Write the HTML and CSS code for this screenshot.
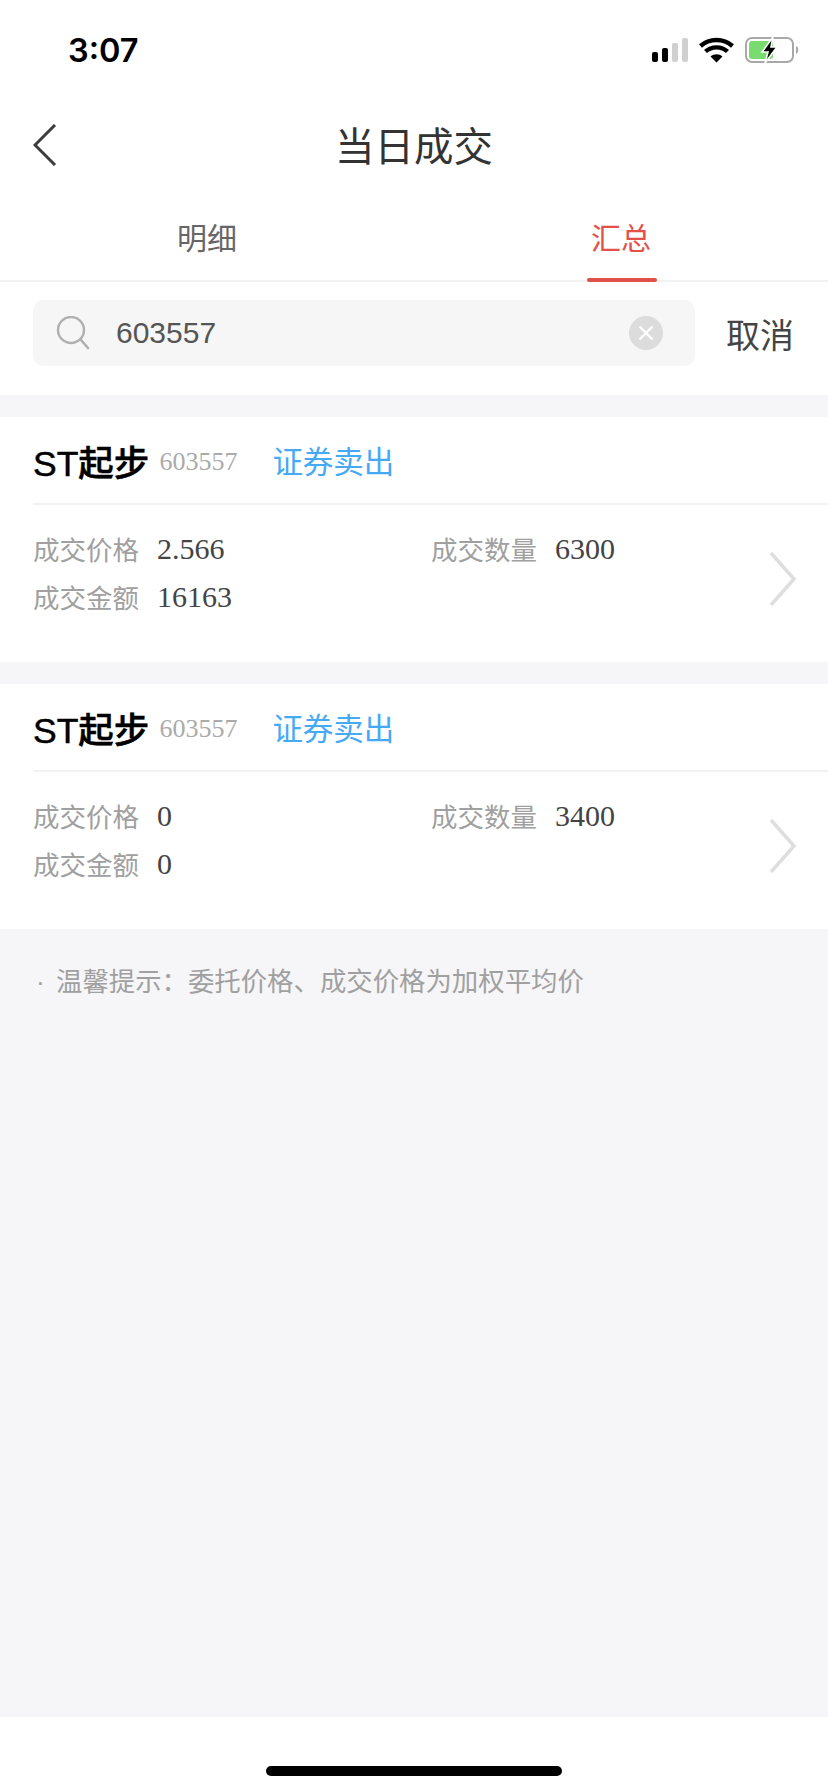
FILE: index.html
```html
<!DOCTYPE html>
<html lang="en">
<head>
    <meta charset="UTF-8">
    <meta name="viewport" content="width=device-width, initial-scale=1.0">
    <title>当日成交</title>
    <link rel="stylesheet" href="styles.css">
</head>
<body>
    <div class="screen">
        <div class="status-bar">
            <span class="status-time">3:07</span>
            <svg class="status-icons" width="148" height="26" viewBox="0 0 148 26">
                <rect x="1" y="15" width="6" height="10" rx="2" fill="#000"/>
                <rect x="11" y="11" width="6" height="14" rx="2" fill="#000"/>
                <rect x="21" y="6" width="6" height="19" rx="2" fill="#d0d0d0"/>
                <rect x="31" y="1" width="6" height="24" rx="2" fill="#d0d0d0"/>
                <path d="M49.5 9 C58.5 1 72.5 1 81.5 9 M54.5 14.5 C60.5 9 70.5 9 76.5 14.5" fill="none" stroke="#000" stroke-width="4.4"/>
                <path d="M59.5 19.5 C63 16.5 68 16.5 71.5 19.5 L65.5 25.5 Z" fill="#000"/>
                <rect x="95" y="1" width="47" height="24" rx="6" fill="none" stroke="#a8a8a8" stroke-width="2"/>
                <rect x="98" y="4" width="24" height="18" rx="3" fill="#7adb6f"/>
                <path d="M145 9 C148 10 148 16 145 17 Z" fill="#a8a8a8"/>
                <path d="M122 0 L111 15 L117 15 L114 26 L126 10 L120 10 Z" fill="#000" stroke="#fff" stroke-width="1.6"/>
            </svg>
        </div>

        <div class="nav-bar">
            <svg class="back-icon" width="24" height="42" viewBox="0 0 24 42">
                <path d="M22 1 L2 21 L22 41" fill="none" stroke="#3c3c3c" stroke-width="3"/>
            </svg>
            <h1 class="nav-title">当日成交</h1>
        </div>

        <div class="tabs">
            <div class="tab">明细</div>
            <div class="tab tab-active">汇总</div>
        </div>

        <div class="search-row">
            <div class="search-box">
                <svg class="search-icon" width="34" height="34" viewBox="0 0 34 34">
                    <circle cx="15" cy="14" r="13" fill="none" stroke="#b0b0b0" stroke-width="2.4"/>
                    <path d="M25 24 L32 32" stroke="#b0b0b0" stroke-width="2.6" stroke-linecap="round"/>
                </svg>
                <span class="search-text">603557</span>
                <svg class="clear-icon" width="34" height="34" viewBox="0 0 34 34">
                    <circle cx="17" cy="17" r="17" fill="#dcdcdc"/>
                    <path d="M10.5 10.5 L23.5 23.5 M23.5 10.5 L10.5 23.5" stroke="#fff" stroke-width="2.4"/>
                </svg>
            </div>
            <span class="search-cancel">取消</span>
        </div>

        <div class="content">
            <div class="card">
                <div class="card-head">
                    <span class="stock-name">ST起步</span>
                    <span class="stock-code">603557</span>
                    <span class="trade-type">证券卖出</span>
                </div>
                <div class="card-body">
                    <div class="fields">
                        <div class="field"><span class="field-label">成交价格</span><span class="field-value">2.566</span></div>
                        <div class="field"><span class="field-label">成交数量</span><span class="field-value">6300</span></div>
                        <div class="field"><span class="field-label">成交金额</span><span class="field-value">16163</span></div>
                    </div>
                    <svg class="card-arrow" width="28" height="54" viewBox="0 0 28 54">
                        <path d="M2 1 L25 27 L2 53" fill="none" stroke="#dedede" stroke-width="3.5"/>
                    </svg>
                </div>
            </div>

            <div class="card">
                <div class="card-head">
                    <span class="stock-name">ST起步</span>
                    <span class="stock-code">603557</span>
                    <span class="trade-type">证券卖出</span>
                </div>
                <div class="card-body">
                    <div class="fields">
                        <div class="field"><span class="field-label">成交价格</span><span class="field-value">0</span></div>
                        <div class="field"><span class="field-label">成交数量</span><span class="field-value">3400</span></div>
                        <div class="field"><span class="field-label">成交金额</span><span class="field-value">0</span></div>
                    </div>
                    <svg class="card-arrow" width="28" height="54" viewBox="0 0 28 54">
                        <path d="M2 1 L25 27 L2 53" fill="none" stroke="#dedede" stroke-width="3.5"/>
                    </svg>
                </div>
            </div>

            <p class="tip"><span class="tip-dot">·</span>温馨提示：委托价格、成交价格为加权平均价</p>
        </div>

        <div class="home-area">
            <div class="home-bar"></div>
        </div>
    </div>
</body>
</html>
```

FILE: styles.css
```css
body {
    margin: 0;
    background-color: #fff;
    font-family: "Liberation Sans", "Noto Sans CJK SC", sans-serif;
}

.screen {
    display: flex;
    flex-direction: column;
    width: 828px;
    height: 1792px;
    overflow: hidden;
}

/* status bar */
.status-bar {
    display: flex;
    justify-content: space-between;
    align-items: center;
    height: 100px;
    padding: 0 29px 0 68px;
    box-sizing: border-box;
}

.status-time {
    font-family: Inter, "Liberation Sans", sans-serif;
    font-size: 32.5px;
    font-weight: 600;
    color: #000;
}

.status-icons {
    display: block;
}

/* nav */
.nav-bar {
    display: flex;
    justify-content: center;
    align-items: center;
    position: relative;
    height: 94px;
}

.back-icon {
    position: absolute;
    left: 33px;
    top: 24px;
}

.nav-title {
    margin: 0 0 7px;
    font-size: 39.5px;
    font-weight: 400;
    color: #333;
}

/* tabs */
.tabs {
    display: flex;
    height: 86px;
    border-bottom: 2px solid #f2f2f2;
    box-sizing: content-box;
}

.tab {
    flex: 1;
    position: relative;
    padding-top: 23px;
    text-align: center;
    font-size: 30px;
    line-height: 44px;
    color: #666;
}

.tab-active {
    color: #e4514a;
}

.tab-active::after {
    content: "";
    position: absolute;
    left: 173px;
    bottom: -2px;
    width: 70px;
    height: 4px;
    border-radius: 2px;
    background-color: #e04f48;
}

/* search */
.search-row {
    display: flex;
    align-items: center;
    height: 113px;
    padding: 18px 34px 29px 33px;
    box-sizing: border-box;
}

.search-box {
    display: flex;
    align-items: center;
    flex: 1;
    height: 66px;
    padding: 0 32px 0 23px;
    border-radius: 10px;
    background-color: #f6f6f6;
}

.search-icon {
    flex: none;
}

.search-text {
    flex: 1;
    margin-left: 26px;
    font-size: 30px;
    color: #555;
}

.search-cancel {
    margin-left: 31px;
    font-size: 34px;
    color: #444;
}

/* list */
.content {
    flex: 1;
    padding-top: 22px;
    background-color: #f6f6f8;
}

.card {
    height: 245px;
    margin-bottom: 22px;
    padding-left: 33px;
    background-color: #fff;
}

.card:nth-of-type(2) {
    margin-bottom: 0;
}

.card-head {
    display: flex;
    align-items: center;
    height: 86px;
    border-bottom: 2px solid #f2f2f2;
}

.stock-name {
    font-size: 35.5px;
    font-weight: 500;
    color: #000;
    -webkit-text-stroke: 0.5px #000;
}

.stock-code {
    margin-left: 10px;
    padding-top: 4px;
    font-family: "Liberation Serif", serif;
    font-size: 26px;
    color: #aaa;
}

.trade-type {
    margin-left: 35px;
    font-size: 30.5px;
    color: #45a9f4;
}

.card-body {
    display: flex;
    align-items: flex-start;
    padding-top: 20px;
}

.fields {
    display: grid;
    flex: 1;
    grid-template-columns: 398px 1fr;
    grid-auto-rows: 48px;
}

.field {
    display: flex;
    align-items: center;
}

.field-label {
    width: 124px;
    margin-bottom: 2px;
    font-size: 26.5px;
    color: #a0a0a0;
}

.field-value {
    font-family: "Liberation Serif", serif;
    font-size: 30px;
    color: #444;
}

.card-arrow {
    flex: none;
    margin: 27px 31px 0 0;
}

.tip {
    margin: 0;
    padding: 35px 0 0 36px;
    font-size: 26.4px;
    line-height: 36px;
    color: #a0a0a0;
}

.tip-dot {
    display: inline-block;
    width: 20px;
}

/* home indicator */
.home-area {
    display: flex;
    justify-content: center;
    height: 75px;
    padding-top: 49px;
    box-sizing: border-box;
}

.home-bar {
    width: 296px;
    height: 10px;
    border-radius: 5px;
    background-color: #000;
}
```
